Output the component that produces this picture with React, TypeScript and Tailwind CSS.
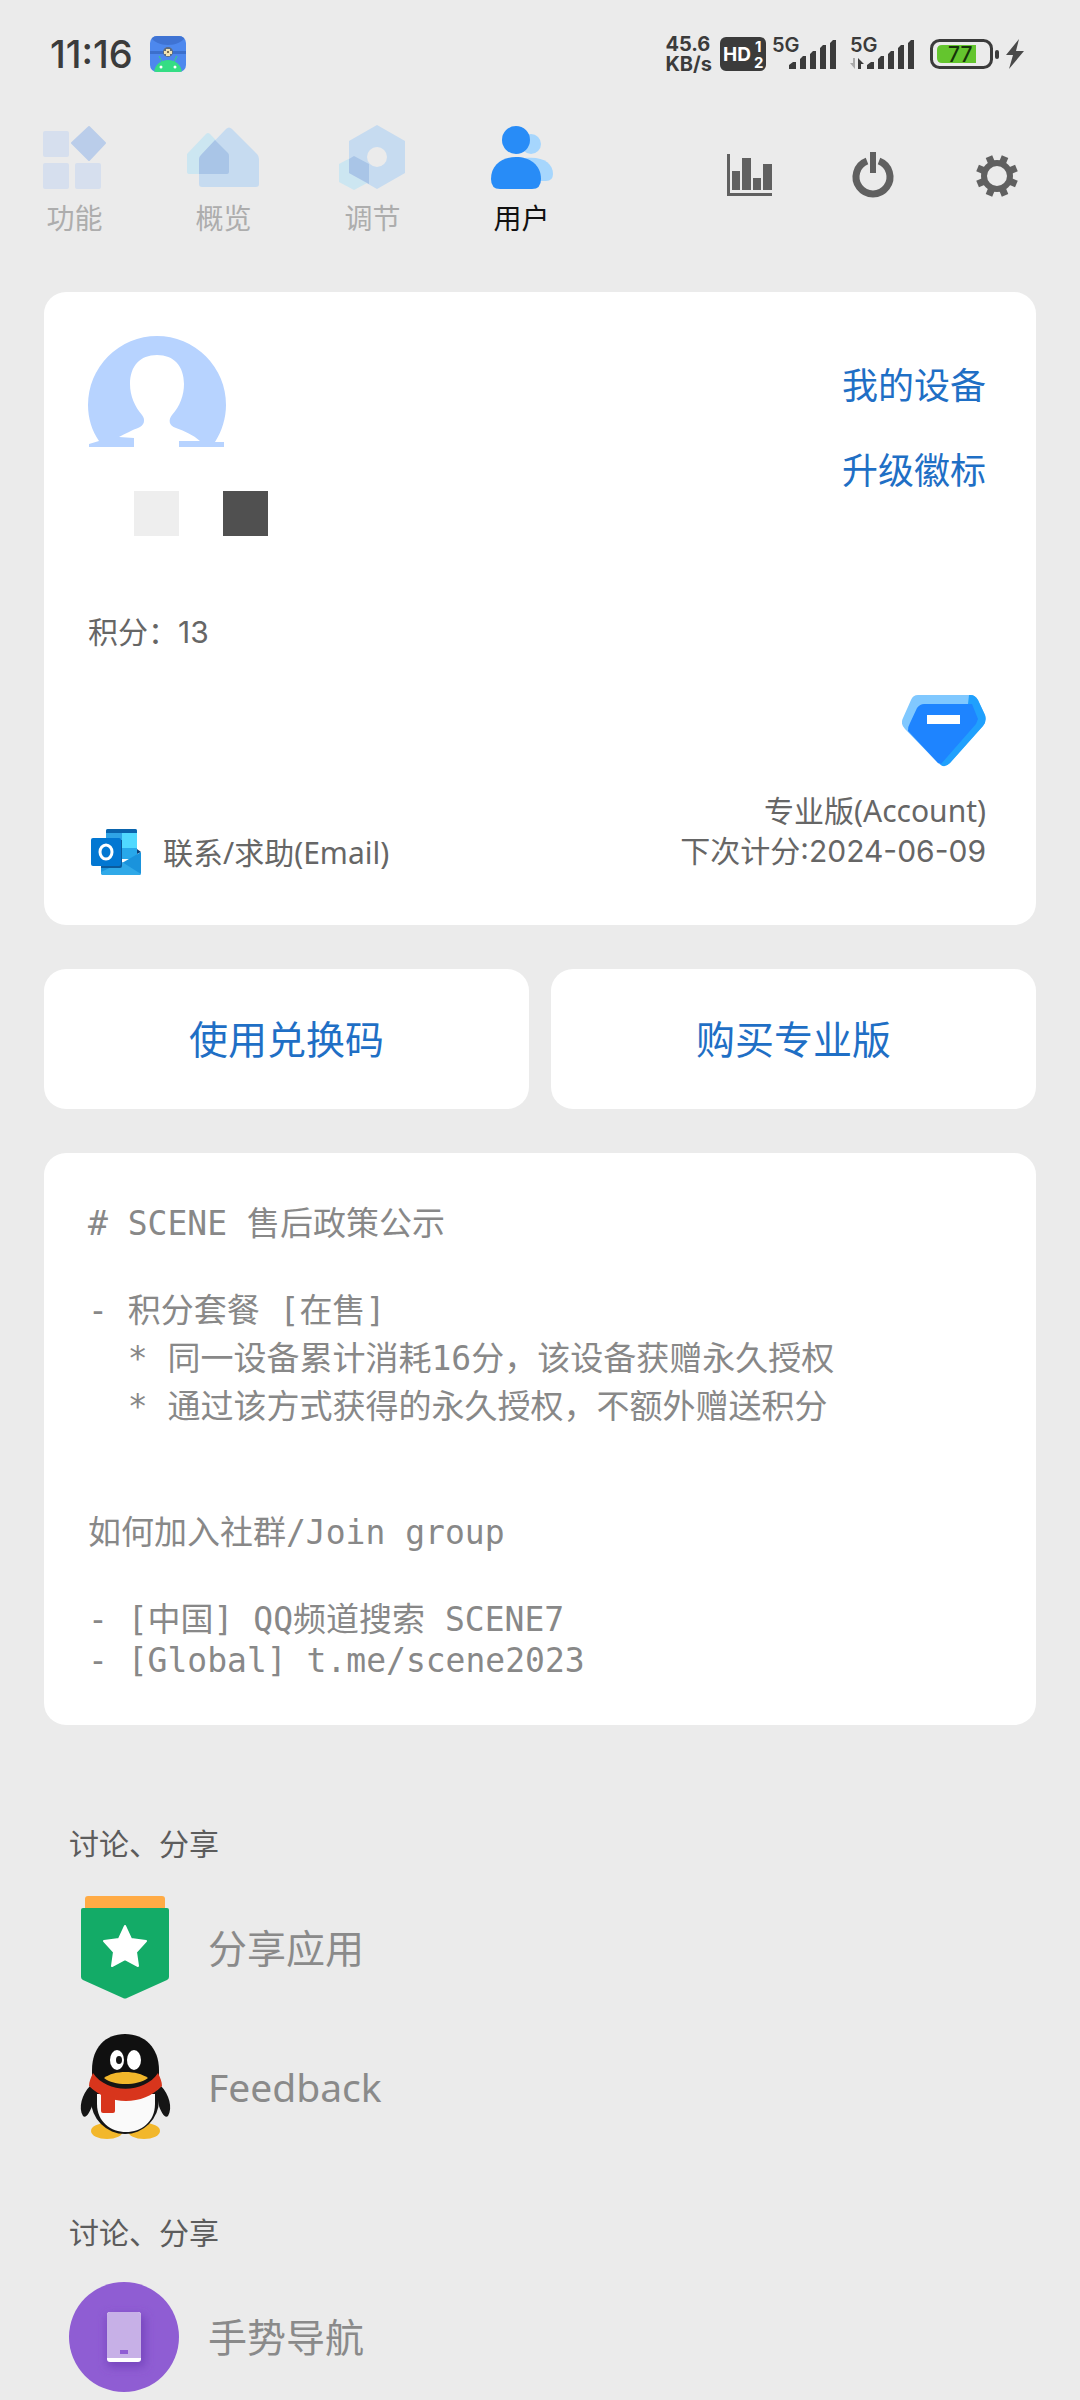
import type { ReactNode } from "react";

const mono = "font-['DejaVu_Sans_Mono','Noto_Sans_CJK_SC',monospace]";
const digits = "font-['Inter','Noto_Sans_CJK_SC',sans-serif]";

function AppBadge() {
  return (
    <svg viewBox="0 0 36 36" className="w-9 h-9" aria-hidden="true">
      <clipPath id="badge"><rect width="36" height="36" rx="7" /></clipPath>
      <g clipPath="url(#badge)">
        <rect width="36" height="36" fill="#4d88ee" />
        <path d="M0 0H36C30 12 6 12 0 0Z" fill="#3f73d3" />
        <rect y="15" width="36" height="3" fill="#3b6fcc" />
        <path d="M12 26L9 20M24 26l3-6" stroke="#34d77f" strokeWidth="1" />
        <path d="M4 36C6 20 30 20 32 36Z" fill="#34dd84" />
        <circle cx="11" cy="31" r="1.5" fill="#fff" />
        <circle cx="25" cy="31" r="1.5" fill="#fff" />
        <circle cx="18" cy="16" r="5" fill="#5d6c80" />
        <path d="M16 13h4v2h2v3h-2v2h-4v-2h-2v-3h2z" fill="#f3e2b0" />
        <circle cx="18" cy="16" r="1" fill="#5a4a30" />
      </g>
    </svg>
  );
}

function HdBadge() {
  return (
    <svg viewBox="0 0 46 34" className="w-[46px] h-[34px] font-['Inter',sans-serif] font-bold" fill="#fff">
      <rect width="46" height="34" rx="6" fill="#3b3b3b" />
      <text x="3" y="24" fontSize="19">HD</text>
      <text x="35" y="15" fontSize="15">1</text>
      <text x="34" y="31" fontSize="15">2</text>
    </svg>
  );
}

function Signal({ arrows = false }: { arrows?: boolean }) {
  return (
    <svg viewBox="0 -7 66 48" className="w-[66px] h-12 font-['Inter',sans-serif] font-semibold" fill="#3b3b3b">
      <text x="0" y="15" fontSize="20">5G</text>
      {arrows && (
        <>
          <path d="M5 21v11L0 26h3v-5z" fill="#a9a9a9" />
          <path d="M8 32V21l6 6h-3v5z" />
        </>
      )}
      <path d="M17 32v-4l4-3h3v7zM28 32V22l3-3h3v13zM38 32V17l3-3h3v18zM48 32V11l3-3h3v24zM58 32V6l3-3h3v29z" />
    </svg>
  );
}

function Battery() {
  return (
    <svg viewBox="0 0 94 32" className="w-[94px] h-8 font-['Inter',sans-serif] font-medium">
      <rect x="1.5" y="2.5" width="60" height="27" rx="8" fill="none" stroke="#3b3b3b" strokeWidth="3" />
      <path d="M12 7H46V25H12Q7 25 7 20V12Q7 7 12 7Z" fill="#64c52e" />
      <rect x="65" y="12" width="4" height="9" rx="2" fill="#3b3b3b" />
      <text x="18" y="24" fontSize="21" fill="#16330a">77</text>
      <path d="M89 1L76 17h7l-4 14 15-18h-8z" fill="#4a4a4a" />
    </svg>
  );
}

function StatusBar() {
  return (
    <div className="flex items-center h-[108px] pl-[50px] pr-14 text-[#3b3b3b] font-['Inter',sans-serif]">
      <span className="text-[38px] font-medium leading-none">11:16</span>
      <div className="ml-[17px]"><AppBadge /></div>
      <div className="ml-auto flex items-center">
        <div className="mr-2 text-xl leading-5 font-bold">
          <div>45.6</div>
          <div>KB/s</div>
        </div>
        <HdBadge />
        <div className="ml-1.5 flex gap-3"><Signal /><Signal arrows /></div>
        <div className="ml-3.5"><Battery /></div>
      </div>
    </div>
  );
}

const tabs: { label: string; icon: ReactNode }[] = [
  {
    label: "功能",
    icon: (
      <>
        <g fill="#d6dfee">
          <rect x="5" y="10" width="26" height="26" rx="2" />
          <rect x="5" y="42" width="26" height="26" rx="2" />
          <rect x="37" y="42" width="26" height="26" rx="2" />
        </g>
        <path d="M51 6L67 22L51 39L34 22Z" fill="#bacdea" stroke="#bacdea" strokeWidth="2" strokeLinejoin="round" />
      </>
    ),
  },
  {
    label: "概览",
    icon: (
      <>
        <path d="M19 13Q21 11 23 13L42 33V53H2Q0 53 0 51V33Z" fill="#cce6f1" />
        <path d="M39 8Q42 5 45 8L70 33Q72 35 72 38V63Q72 66 69 66H15Q12 66 12 63V38Q12 36 14 34Z" fill="#c6dbf0" />
        <path d="M28 19L41 32Q42 33 42 35V51Q42 53 40 53H12V38Q12 36 14 34Z" fill="#a9c5e7" />
      </>
    ),
  },
  {
    label: "调节",
    icon: (
      <>
        <path d="M18 35L33 43V61L18 69L3 61V43Z" fill="#cce6f1" />
        <path d="M41 4L69 20V52L41 68L13 52V20Z" fill="#c6dbf0" />
        <path d="M13 38L18 35L33 43V63L13 52Z" fill="#a9c5e7" />
        <circle cx="41" cy="36" r="10" fill="#ebebeb" />
      </>
    ),
  },
  {
    label: "用户",
    icon: (
      <>
        <circle cx="46" cy="23" r="10" fill="#a6d6fd" />
        <path d="M40 37C58 35 68 42 68 53Q68 60 61 60H40Z" fill="#a6d6fd" />
        <ellipse cx="31" cy="19" rx="14" ry="14" fill="#288cf7" />
        <path d="M6 58C6 44 17 36 31 36S56 44 56 58Q56 68 47 68H15Q6 68 6 58Z" fill="#288cf7" />
      </>
    ),
  },
];

const actions: { label: string; icon: ReactNode }[] = [
  {
    label: "图表",
    icon: <path d="M2 2h3v39h42v3H2zM7 19h8v19H7zM17 6h9v32h-9zM28 26h8v12h-8zM38 12h9v26h-9z" />,
  },
  {
    label: "电源",
    icon: (
      <>
        <path d="M18 9A17 17 0 1 0 30 9" fill="none" stroke="#606060" strokeWidth="7" />
        <rect x="21" y="0" width="6" height="21" />
      </>
    ),
  },
  {
    label: "设置",
    icon: (
      <>
        <circle cx="24" cy="24" r="13" fill="none" stroke="#606060" strokeWidth="6" />
        <g stroke="#606060" strokeWidth="7">
          {[22.5, 67.5, 112.5, 157.5, 202.5, 247.5, 292.5, 337.5].map((a) => (
            <path key={a} d="M24 10V3" transform={`rotate(${a} 24 24)`} />
          ))}
        </g>
      </>
    ),
  },
];

function Header() {
  return (
    <header className="flex items-start justify-between pt-[13px] pr-[21px]">
      <nav className="flex">
        {tabs.map((t, i) => (
          <button
            key={t.label}
            aria-current={i === 3 ? "page" : undefined}
            className={`flex flex-col items-center w-[149px] text-[28px] leading-[50px] ${i === 3 ? "text-[#111]" : "text-[#adadad]"}`}
          >
            <svg viewBox="0 0 74 72" className="w-[74px] h-[72px]" aria-hidden="true">{t.icon}</svg>
            {t.label}
          </button>
        ))}
      </nav>
      <div className="flex">
        {actions.map((a) => (
          <button key={a.label} aria-label={a.label} className="flex items-center justify-center w-[124px] h-[110px]">
            <svg viewBox="0 0 48 48" className="w-12 h-12" fill="#606060">{a.icon}</svg>
          </button>
        ))}
      </div>
    </header>
  );
}

function Avatar() {
  return (
    <svg viewBox="0 0 180 200" className="w-[180px] h-[200px]" role="img" aria-label="头像">
      <path
        d="M11 105C4 95 0 82 0 69A69 69 0 0 1 138 69C138 82 134 95 127 106H136V111H91V105H112C105 99 97 95 88 92C81 90 80 84 84 79C92 70 96 59 96 48C96 30 86 19 69 19S42 30 42 48C42 60 47 71 54 79C58 84 56 90 50 92C44 94 37 98 31 101L46 102V111H1V108Z"
        fill="#b7d3ff"
      />
      <rect x="46" y="155" width="45" height="45" fill="#eee" />
      <rect x="135" y="155" width="45" height="45" fill="#505050" />
    </svg>
  );
}

function OutlookIcon() {
  return (
    <svg viewBox="0 0 50 46" className="w-[50px] h-[46px]" aria-hidden="true">
      <path d="M17 0H44Q46 0 46 2V26H15V2Q15 0 17 0Z" fill="#1490df" />
      <path d="M17 0H44Q46 0 46 2V4H15V2Q15 0 17 0Z" fill="#0a64ad" />
      <path d="M15 4H31V19H15Z" fill="#2fa4e6" />
      <path d="M31 4H46V19H31Z" fill="#50d9ff" />
      <path d="M31 19H46V30H31Z" fill="#28a8ea" />
      <path d="M46 20L50 23L46 25Z" fill="#0a3f77" />
      <path d="M10 34H31L50 23V44Q50 46 48 46H12Q10 46 10 44Z" fill="#1a93dc" />
      <path d="M31 33L50 45Q49 46 48 46H12Q10 46 10 43Z" fill="#30a9e8" />
      <path d="M15 11H31V37Q31 39 29 39H10V34Z" fill="#0b5a9c" />
      <rect y="9" width="30" height="28" rx="2" fill="#0277d2" />
      <ellipse cx="15" cy="23" rx="6" ry="7" fill="none" stroke="#fff" strokeWidth="3" />
    </svg>
  );
}

function Gem() {
  return (
    <svg viewBox="0 0 84 72" className="w-[84px] h-[72px]" aria-hidden="true">
      <path d="M16 0H68Q73 0 76 5L83 20Q85 26 81 31L48 68Q42 74 36 68L3 34Q-2 29 1 23L9 5Q11 0 16 0Z" fill="#80c8ff" />
      <path d="M67 0H69Q73 0 76 5L83 20Q85 26 81 31L48 68Q42 74 38 69L66 9Z" fill="#20a0fd" />
      <path d="M22 9H70L76 24L74 29L39 69L36 68L6 36Q6 31 8 28L15 13Q18 9 22 9Z" fill="#1e84ff" />
      <rect x="25" y="20" width="33" height="9" fill="#fff" />
    </svg>
  );
}

function AccountCard() {
  return (
    <section className="flex justify-between rounded-[22px] bg-white p-11 text-[30px] leading-[41px] text-[#666]">
      <div className="flex flex-col items-start">
        <Avatar />
        <p className={`mt-[76px] ${digits}`}>积分：13</p>
        <a href="#email" className="mt-[170px] flex items-center h-[58px] pl-[3px] gap-[22px]">
          <OutlookIcon />
          联系/求助(Email)
        </a>
      </div>
      <div className="flex flex-col items-end pt-[7px] pr-1.5 pb-[9px]">
        <a href="#devices" className="text-4xl leading-[85px] text-[#1f6fc5]">我的设备</a>
        <a href="#badge-upgrade" className="text-4xl leading-[85px] text-[#1f6fc5]">升级徽标</a>
        <div className="mt-auto flex flex-col items-end">
          <Gem />
          <p className="mt-[23px]">专业版(Account)</p>
          <p className={digits}>下次计分:2024-06-09</p>
        </div>
      </div>
    </section>
  );
}

const policy = [
  "# SCENE 售后政策公示",
  "",
  "- 积分套餐 [在售]",
  "  * 同一设备累计消耗16分，该设备获赠永久授权",
  "  * 通过该方式获得的永久授权，不额外赠送积分",
  "",
  "",
  "如何加入社群/Join group",
  "",
  "- [中国] QQ频道搜索 SCENE7",
  "- [Global] t.me/scene2023",
];

// lines with Chinese text are taller than latin or empty ones
function lineHeight(line: string) {
  if (!line) return "h-[39px]";
  return /[\u4e00-\u9fff]/.test(line) ? "leading-[48px]" : "leading-[34px]";
}

function PolicyCard() {
  return (
    <section className={`rounded-[22px] bg-white px-11 py-[47px] text-[33px] text-[#888] whitespace-pre-wrap ${mono}`}>
      {policy.map((line, i) => (
        <p key={i} className={lineHeight(line)}>{line}</p>
      ))}
    </section>
  );
}

function ShareIcon() {
  return (
    <>
      <path d="M16 15V6Q16 3 19 3H93Q96 3 96 6V15Z" fill="#ffab45" />
      <path d="M14 15H98Q100 15 100 17V84Q100 86 98 87L58 105Q56 106 54 105L14 87Q12 86 12 84V17Q12 15 14 15Z" fill="#13ab67" />
      <path d="M56 33L62 46L77 48L67 59L69 73L56 66L43 73L45 59L35 48L50 46Z" fill="#fff" stroke="#fff" strokeWidth="2" strokeLinejoin="round" />
    </>
  );
}

function PenguinIcon() {
  return (
    <>
      <ellipse cx="38" cy="99" rx="16" ry="8" fill="#f2b72b" />
      <ellipse cx="75" cy="99" rx="16" ry="8" fill="#f2b72b" />
      <path d="M21 54C13 62 9 76 14 84C17 87 21 80 23 74L25 58ZM92 54C100 62 104 76 99 84C96 87 92 80 90 74L88 58Z" fill="#151515" />
      <ellipse cx="56" cy="68" rx="34" ry="34" fill="#151515" />
      <path d="M23 48V38C23 16 36 2 56 2S90 16 90 38V48Z" fill="#101010" />
      <path d="M28 62H86V72C86 90 72 100 57 100S28 90 28 72Z" fill="#fafafa" />
      <path d="M24 41C22 45 20 50 20 54C40 74 74 74 93 54C93 50 91 45 89 41C75 62 38 62 24 41Z" fill="#d8351c" />
      <path d="M32 59H46V79Q46 81 44 81H34Q32 81 32 79Z" fill="#d8351c" />
      <ellipse cx="48" cy="28" rx="7" ry="10" fill="#fff" />
      <ellipse cx="65" cy="28" rx="7" ry="10" fill="#fff" />
      <ellipse cx="50" cy="28" rx="3" ry="4" fill="#151515" />
      <path d="M35 46C45 38 68 38 79 46C68 54 45 54 35 46Z" fill="#f2b72b" />
    </>
  );
}

function GestureIcon() {
  return (
    <>
      <defs>
        <filter id="soft" x="-50%" y="-50%" width="200%" height="200%">
          <feGaussianBlur stdDeviation="5" />
        </filter>
      </defs>
      <circle cx="55" cy="55" r="55" fill="#8f5dd3" />
      <rect x="38" y="33" width="38" height="52" rx="4" fill="#7645bd" filter="url(#soft)" />
      <rect x="38" y="30" width="34" height="50" rx="3" fill="#fff" />
      <path d="M38 76V33Q38 30 41 30H69Q72 30 72 33V76Z" fill="#c7b0e7" />
      <rect x="51" y="68" width="8" height="4" fill="#8f5dd3" />
    </>
  );
}

const groups = [
  {
    title: "讨论、分享",
    items: [
      { label: "分享应用", icon: <ShareIcon /> },
      { label: "Feedback", icon: <PenguinIcon /> },
    ],
  },
  { title: "讨论、分享", items: [{ label: "手势导航", icon: <GestureIcon /> }] },
];

export default function App() {
  return (
    <div className="min-h-screen bg-[#ebebeb] font-['Noto_Sans','Noto_Sans_CJK_SC',sans-serif]">
      <StatusBar />
      <Header />

      <main className="px-11 pt-[49px] pb-2">
        <AccountCard />
        <div className="my-11 grid grid-cols-2 gap-[22px]">
          <button className="h-[140px] rounded-[22px] bg-white text-[39px] text-[#1f6fc5]">使用兑换码</button>
          <button className="h-[140px] rounded-[22px] bg-white text-[39px] text-[#1f6fc5]">购买专业版</button>
        </div>
        <PolicyCard />

        <div className="mt-[98px] flex flex-col gap-[70px] px-[25px]">
          {groups.map((g, i) => (
            <section key={i}>
              <h2 className="mb-[29px] text-[30px] leading-[41px] text-[#5c5c5c]">{g.title}</h2>
              <div className="flex flex-col gap-[29px]">
                {g.items.map((it) => (
                  <button key={it.label} className="flex items-center gap-[29px] text-left text-[39px] leading-[50px] text-[#8a8a8a]">
                    <svg viewBox="0 0 110 110" className="w-[110px] h-[110px]" aria-hidden="true">{it.icon}</svg>
                    {it.label}
                  </button>
                ))}
              </div>
            </section>
          ))}
        </div>
      </main>
    </div>
  );
}
